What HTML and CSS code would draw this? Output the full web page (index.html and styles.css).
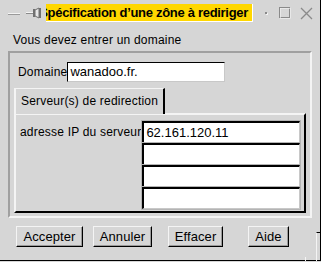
FILE: index.html
```html
<!DOCTYPE html>
<html lang="fr">
<head>
  <meta charset="UTF-8">
  <title>Spécification d'une zône à rediriger</title>
  <link rel="stylesheet" href="styles.css">
</head>
<body>
  <div class="window">
    <div class="titlebar">
      <svg class="tb-icon minimize" width="14" height="4" viewBox="0 0 14 4">
        <rect x="0" y="1" width="12" height="2" fill="#9a9a9a"/>
        <rect x="0" y="1" width="12" height="1" fill="#f4f4f4"/>
      </svg>
      <svg class="tb-icon pin" width="16" height="12" viewBox="0 0 16 12">
        <rect x="0" y="5" width="7" height="2" fill="#8a8a8a"/>
        <rect x="0" y="5" width="7" height="1" fill="#f4f4f4"/>
        <rect x="7" y="2" width="2" height="8" fill="#707070"/>
        <path d="M9 3 L13 1 L13 11 L9 9 Z" fill="#e8e8e8" stroke="#707070" stroke-width="1"/>
        <rect x="13" y="1" width="2" height="10" fill="#707070"/>
      </svg>
      <div class="title"><span>Spécification d’une zône à rediriger</span></div>
      <span class="tb-dot"></span>
      <svg class="tb-icon square" width="12" height="12" viewBox="0 0 12 12">
        <rect x="0.5" y="0.5" width="10" height="10" fill="none" stroke="#8a8a8a"/>
        <rect x="1.5" y="1.5" width="10" height="10" fill="none" stroke="#f4f4f4" stroke-width="0.6"/>
      </svg>
      <svg class="tb-icon close" width="13" height="13" viewBox="0 0 13 13">
        <path d="M1 1 L12 12 M12 1 L1 12" stroke="#8a8a8a" stroke-width="1.3"/>
      </svg>
    </div>

    <div class="prompt">Vous devez entrer un domaine</div>

    <div class="frame">
      <div class="domain-row">
        <span class="label">Domaine</span>
        <div class="entry domain">wanadoo.fr.</div>
      </div>

      <div class="tabs">
        <div class="tab">Serveur(s) de redirection</div>
      </div>
      <div class="panel">
        <span class="label ip-label">adresse IP du serveur</span>
        <div class="ip-list">
          <div class="entry ip">62.161.120.11</div>
          <div class="entry ip"></div>
          <div class="entry ip"></div>
          <div class="entry ip"></div>
        </div>
      </div>
    </div>

    <div class="buttons">
      <div class="cell"><button class="btn">Accepter</button></div>
      <div class="cell"><button class="btn">Annuler</button></div>
      <div class="cell"><button class="btn">Effacer</button></div>
      <div class="cell"><button class="btn">Aide</button></div>
    </div>

    <span class="grip grip-right"></span>
    <span class="grip grip-bottom"></span>
  </div>
</body>
</html>
```

FILE: styles.css
```css
html, body {
  margin: 0;
  padding: 0;
}
body {
  width: 321px;
  height: 262px;
  overflow: hidden;
  background-color: #d6d6d6;
  font-family: "Liberation Sans", Arial, sans-serif;
  font-size: 12px;
  letter-spacing: 0.2px;
  color: #000;
}
.window {
  width: 320px;
  height: 260px;
  border-right: 1px solid #000;
  border-bottom: 1px solid #000;
  background-color: #d6d6d6;
  position: relative;
}
.titlebar {
  height: 26px;
  display: flex;
  align-items: center;
}
.tb-icon {
  display: block;
  flex: none;
}
.minimize {
  margin-left: 8px;
  margin-top: 1px;
}
.pin {
  margin-left: 4px;
}
.title {
  margin-left: 4px;
  width: 206px;
  height: 17px;
  background-color: #ffd700;
  border-right: 1px solid #fff;
  border-bottom: 1px solid #fff;
  overflow: hidden;
  display: flex;
  justify-content: flex-end;
  align-items: center;
}
.title span {
  white-space: nowrap;
  font-weight: bold;
  font-size: 13px;
  letter-spacing: -0.3px;
  padding-right: 4px;
}
.tb-dot {
  width: 2px;
  height: 2px;
  background-color: #8a8a8a;
  margin-left: 12px;
  box-shadow: 1px 1px 0 #f4f4f4;
}
.square {
  margin-left: 12px;
}
.close {
  margin-left: 9px;
}
.prompt {
  margin: 7px 0 0 13px;
  line-height: 14px;
}
.frame {
  margin: 4px 0 0 8px;
  width: 304px;
  box-sizing: border-box;
  border: 2px solid;
  border-color: #a0a0a0 #f4f4f4 #f4f4f4 #a0a0a0;
  padding: 9px 4px 3px 4px;
}
.domain-row {
  display: flex;
  align-items: center;
  height: 20px;
  margin-left: 4px;
}
.entry {
  background-color: #fff;
  border: 1px solid;
  border-color: #000 #c8c8c8 #c8c8c8 #000;
  box-sizing: border-box;
  padding: 0 2px;
  white-space: nowrap;
  font-size: 13px;
  letter-spacing: 0;
}
.domain {
  width: 158px;
  height: 20px;
  line-height: 18px;
}
.tabs {
  display: flex;
  margin-top: 6px;
}
.tab {
  height: 26px;
  box-sizing: border-box;
  padding: 0 4px 0 5px;
  width: 151px;
  white-space: nowrap;
  line-height: 24px;
  border-top: 1px solid #f4f4f4;
  border-left: 2px solid #f4f4f4;
  border-right: 2px solid #000;
  background-color: #d6d6d6;
  position: relative;
  z-index: 1;
  margin-bottom: -1px;
}
.panel {
  height: 100px;
  box-sizing: border-box;
  width: 292px;
  border: 2px solid;
  border-color: #f4f4f4 #000 #000 #f4f4f4;
  padding: 6px 0 0 4px;
  display: flex;
}
.ip-label {
  line-height: 22px;
  height: 22px;
  white-space: nowrap;
}
.ip-list {
  display: flex;
  flex-direction: column;
  margin-left: 1px;
}
.ip {
  width: 158px;
  height: 22px;
  line-height: 20px;
  border-width: 2px 1px 1px 2px;
  outline: 1px solid #b4b4b4;
}
.buttons {
  display: grid;
  grid-template-columns: repeat(4, 73px);
  margin: 8px 0 0 13px;
}
.cell {
  display: flex;
  justify-content: center;
}
.btn {
  font-family: "Liberation Sans", Arial, sans-serif;
  font-size: 13px;
  letter-spacing: 0.1px;
  height: 21px;
  padding: 0 6px;
  background-color: #d6d6d6;
  border: 1px solid;
  border-color: #f4f4f4 #000 #000 #f4f4f4;
  box-shadow: inset -1px -1px 0 #9a9a9a;
  color: #000;
  line-height: 18px;
}
.grip {
  position: absolute;
  border-color: #000;
  border-style: solid;
}
.grip-right {
  right: -1px;
  top: 232px;
  width: 4px;
  height: 28px;
  border-width: 1px 0 0 1px;
  border-color: #000 #000 #000 #f4f4f4;
}
.grip-bottom {
  right: 6px;
  bottom: -1px;
  width: 8px;
  height: 4px;
  border-width: 0 0 0 1px;
  border-color: #f4f4f4;
}
```
